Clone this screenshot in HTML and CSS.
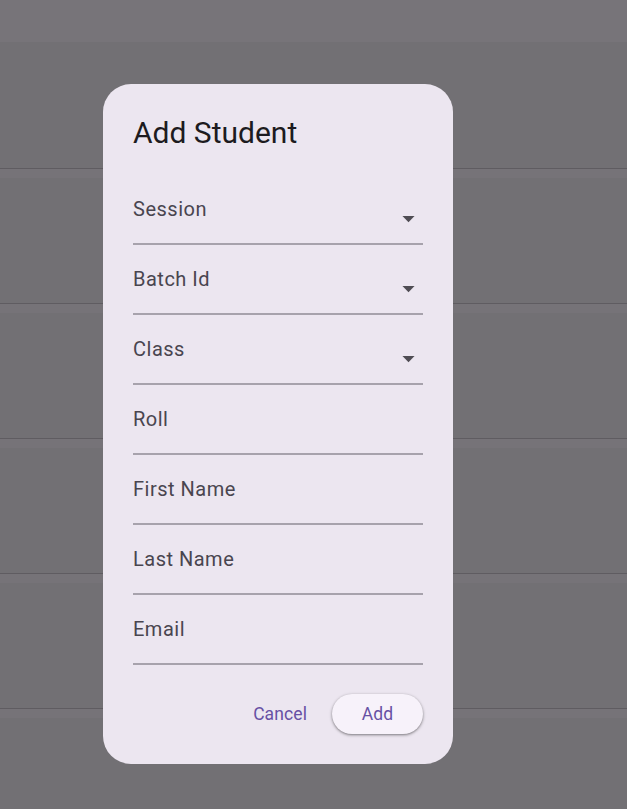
FILE: index.html
```html
<!DOCTYPE html>
<html lang="en">
<head>
<meta charset="utf-8">
<title>Add Student</title>
<link rel="stylesheet" href="styles.css">
</head>
<body>
<div class="page">
  <div class="appbar"></div>
  <div class="row row-first"></div>
  <div class="row"><div class="sep"></div><div class="strip"></div></div>
  <div class="row"><div class="sep"></div><div class="strip"></div></div>
  <div class="row"><div class="sep"></div><div class="strip"></div></div>
  <div class="row"><div class="sep"></div><div class="strip"></div></div>
  <div class="row"><div class="sep"></div><div class="strip"></div></div>
</div>

<div class="dialog" role="dialog" aria-label="Add Student">
  <h1 class="title">Add Student</h1>
  <div class="field">
    <span class="label">Session</span>
    <svg class="arrow" viewBox="0 0 24 24"><path d="M7 10l5 5 5-5z"/></svg>
  </div>
  <div class="field">
    <span class="label">Batch Id</span>
    <svg class="arrow" viewBox="0 0 24 24"><path d="M7 10l5 5 5-5z"/></svg>
  </div>
  <div class="field">
    <span class="label">Class</span>
    <svg class="arrow" viewBox="0 0 24 24"><path d="M7 10l5 5 5-5z"/></svg>
  </div>
  <div class="field"><span class="label">Roll</span></div>
  <div class="field"><span class="label">First Name</span></div>
  <div class="field"><span class="label">Last Name</span></div>
  <div class="field"><span class="label">Email</span></div>
  <div class="actions">
    <button class="btn btn-text">Cancel</button>
    <button class="btn btn-elevated">Add</button>
  </div>
</div>
</body>
</html>
```
FILE: styles.css
```css
* { box-sizing: border-box; }
html, body { margin: 0; padding: 0; }
body {
  width: 627px;
  height: 809px;
  overflow: hidden;
  background: #727074;
  font-family: Roboto, "Liberation Sans", sans-serif;
}
.page {
  display: flex;
  flex-direction: column;
}
.appbar {
  height: 42px;
  background: #777479;
}
.row-first { height: 126px; }
.row {
  display: flex;
  flex-direction: column;
}
.row .sep { height: 1px; background: #5f5c61; }
.row .strip { height: 9px; background: #767378; }
.row:not(.row-first) { height: 135px; }

.dialog {
  position: absolute;
  left: 103px;
  top: 84px;
  width: 350px;
  height: 680px;
  background: #ECE6F0;
  border-radius: 28px;
  padding: 31px 30px 28px 30px;
  display: flex;
  flex-direction: column;
}
.title {
  margin: 0 0 24px 0;
  font-weight: 400;
  font-size: 30px;
  line-height: 36px;
  color: #1D1B20;
}
.field {
  height: 70px;
  flex: none;
  border-bottom: 2px solid #a7a2ac;
  display: flex;
  align-items: flex-start;
  justify-content: space-between;
}
.label {
  padding-top: 22px;
  font-size: 20px;
  line-height: 24px;
  letter-spacing: 0.5px;
  color: #49454F;
}
.arrow {
  width: 29px;
  height: 29px;
  margin-top: 29px;
  fill: #4f4c53;
  flex: none;
}
.actions {
  margin-top: 29px;
  display: flex;
  justify-content: flex-end;
  align-items: center;
  gap: 8px;
}
.btn {
  font-family: Roboto, "Liberation Sans", sans-serif;
  font-size: 17.5px;
  letter-spacing: 0.1px;
  color: #6750A4;
  height: 40px;
  border: none;
  border-radius: 20px;
  background: transparent;
  padding: 0 17px;
}
.btn-elevated {
  width: 91px;
  padding: 0;
  background: #F7F2FA;
  box-shadow: 0 1px 2px rgba(0,0,0,0.3), 0 1px 3px 1px rgba(0,0,0,0.15);
}
```
